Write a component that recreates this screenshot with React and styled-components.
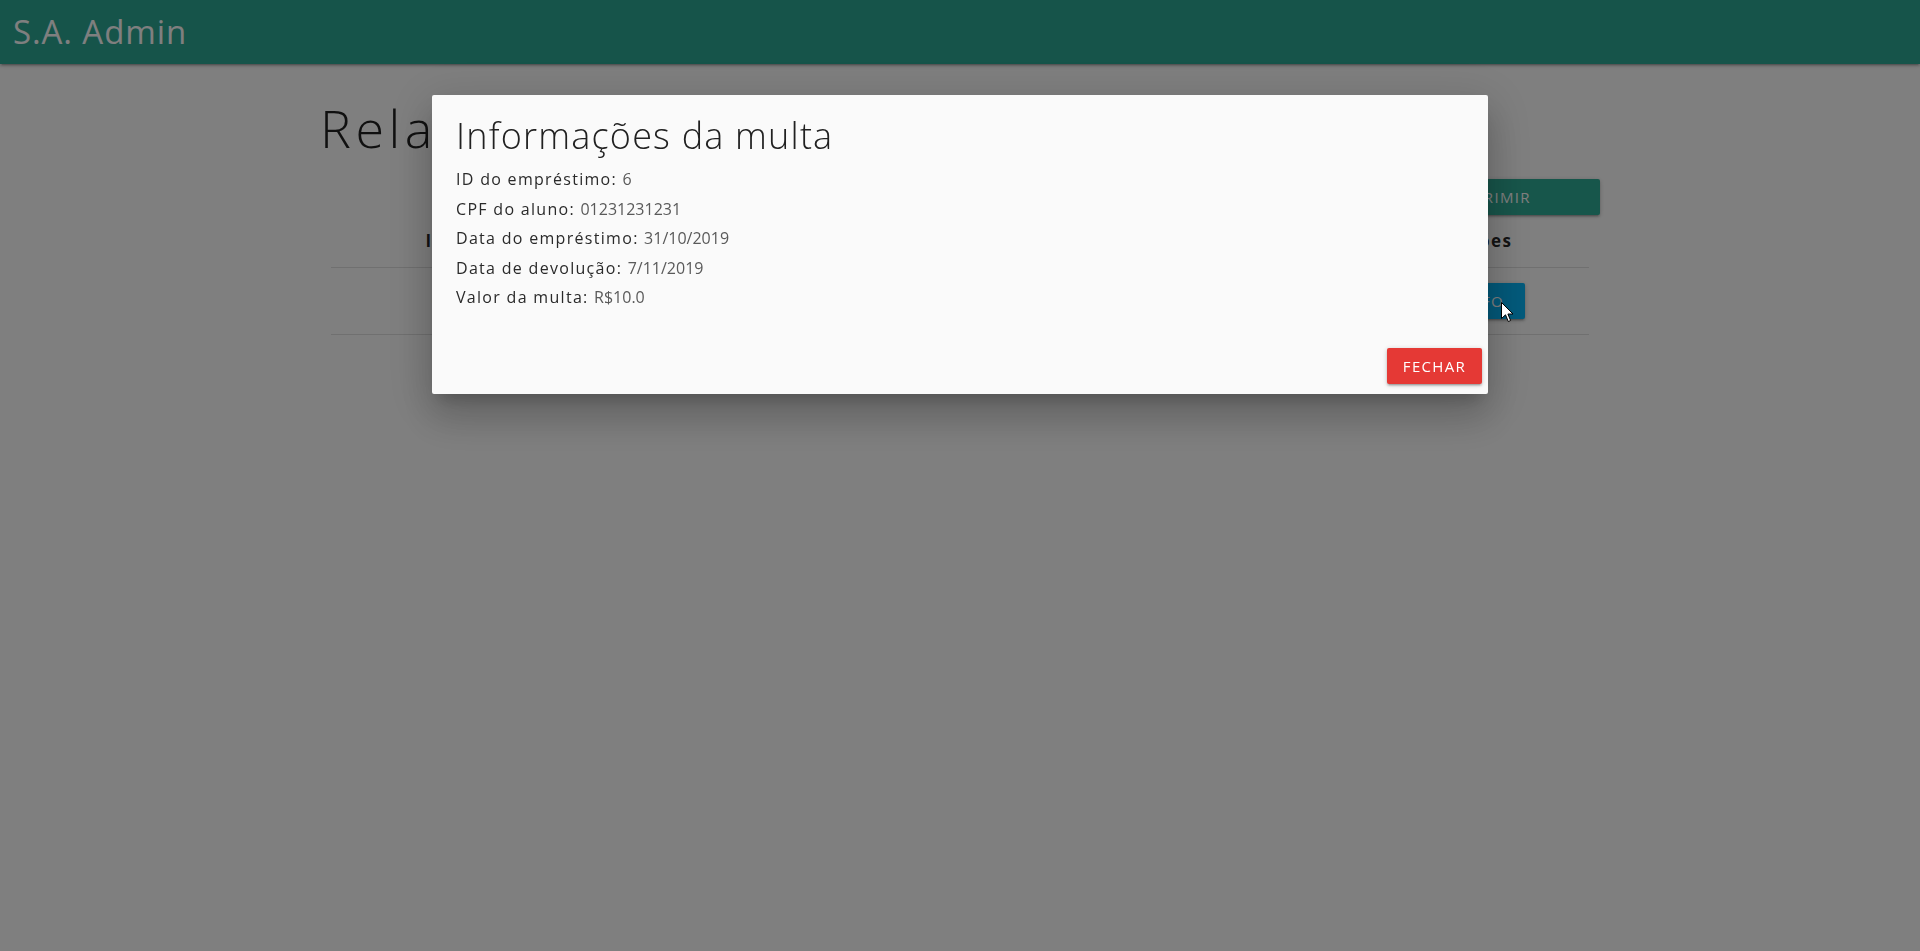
import React from "react";
import styled, { createGlobalStyle } from "styled-components";

const GlobalStyle = createGlobalStyle`
  html, body { margin: 0; padding: 0; }
  body {
    font-family: "Open Sans", "Liberation Sans", sans-serif;
    background: #ffffff;
    color: rgba(0, 0, 0, 0.87);
  }
  * { box-sizing: border-box; }
`;

const Page = styled.div`
  min-height: 100vh;
`;

const Navbar = styled.nav`
  height: 64px;
  background: #2ca894;
  display: flex;
  align-items: center;
  padding-left: 13px;
  box-shadow: 0 2px 2px 0 rgba(0, 0, 0, 0.14), 0 3px 1px -2px rgba(0, 0, 0, 0.12),
    0 1px 5px 0 rgba(0, 0, 0, 0.2);
`;

const Brand = styled.div`
  color: #ffffff;
  font-size: 33px;
  line-height: 64px;
  letter-spacing: 0.9px;
  font-weight: 400;
`;

const Container = styled.main`
  width: 1280px;
  margin: 0 auto;
`;

const PageTitle = styled.h3`
  margin: 35px 0 0;
  font-size: 52px;
  line-height: 57px;
  letter-spacing: 4.5px;
  font-weight: 300;
  color: rgba(0, 0, 0, 0.87);
`;

const Toolbar = styled.div`
  display: flex;
  justify-content: flex-end;
  margin-top: 23px;
`;

const Button = styled.button`
  height: 36px;
  padding: 0 ${(p) => p.$pad || 16}px;
  border: none;
  border-radius: 2px;
  background: ${(p) => p.$bg};
  color: #ffffff;
  font-family: inherit;
  font-size: 15px;
  letter-spacing: 1.3px;
  text-transform: uppercase;
  display: inline-flex;
  align-items: center;
  justify-content: center;
  width: ${(p) => (p.$width ? `${p.$width}px` : "auto")};
  box-shadow: 0 2px 2px 0 rgba(0, 0, 0, 0.14), 0 3px 1px -2px rgba(0, 0, 0, 0.12),
    0 1px 5px 0 rgba(0, 0, 0, 0.2);
  cursor: pointer;
`;

const Table = styled.table`
  width: calc(100% - 22.5px);
  margin: 0 11.25px;
  border-collapse: collapse;
  table-layout: fixed;
`;

const Row = styled.tr`
  border-bottom: 1px solid rgba(0, 0, 0, 0.12);
`;

const Th = styled.th`
  padding: 15px 5px;
  font-size: 17px;
  line-height: 22px;
  letter-spacing: 1.5px;
  font-weight: 700;
  text-align: center;
  white-space: nowrap;
`;

const Td = styled.td`
  padding: 15px 5px;
  font-size: 16px;
  line-height: 23px;
  text-align: center;
  vertical-align: middle;
`;

const Overlay = styled.div`
  position: fixed;
  inset: 0;
  background: rgba(0, 0, 0, 0.5);
  z-index: 10;
`;

const Modal = styled.div`
  position: fixed;
  top: 10%;
  left: 0;
  right: 0;
  margin: 0 auto;
  width: 55%;
  background: #fafafa;
  border-radius: 2px;
  z-index: 11;
  display: flex;
  flex-direction: column;
  box-shadow: 0 24px 38px 3px rgba(0, 0, 0, 0.14), 0 9px 46px 8px rgba(0, 0, 0, 0.12),
    0 11px 15px -7px rgba(0, 0, 0, 0.2);
`;

const ModalContent = styled.div`
  padding: 24px 24px 29px;
`;

const ModalTitle = styled.h4`
  margin: 0 0 14px;
  font-size: 36px;
  line-height: 34px;
  letter-spacing: 1.2px;
  font-weight: 300;
  color: #212121;
`;

const InfoLine = styled.p`
  margin: 0;
  font-size: 16px;
  line-height: 24px;
  & + & {
    margin-top: 5.5px;
  }
`;

const Label = styled.span`
  color: #2a2a2a;
  letter-spacing: 1.3px;
`;

const Value = styled.span`
  color: #5a5a5a;
  letter-spacing: 0px;
`;

const ModalFooter = styled.div`
  height: 56px;
  padding: 4px 6px;
  display: flex;
  justify-content: flex-end;
  align-items: center;
`;

const Cursor = styled.svg`
  position: fixed;
  left: 1501px;
  top: 302px;
  z-index: 20;
  pointer-events: none;
`;

const info = [
  ["ID do empréstimo", "6"],
  ["CPF do aluno", "01231231231"],
  ["Data do empréstimo", "31/10/2019"],
  ["Data de devolução", "7/11/2019"],
  ["Valor da multa", "R$10.0"],
];

const headers = ["ID", "CPF do aluno", "Data do empréstimo", "Data de devolução", "Valor da multa", "Ações"];

export default function App() {
  return (
    <Page>
      <GlobalStyle />
      <Navbar>
        <Brand>S.A. Admin</Brand>
      </Navbar>
      <Container>
        <PageTitle>Relatório de multas</PageTitle>
        <Toolbar>
          <Button $bg="#2fac96" $width={216}>Imprimir</Button>
        </Toolbar>
        <Table>
          <thead>
            <Row>
              {headers.map((h) => (
                <Th key={h}>{h}</Th>
              ))}
            </Row>
          </thead>
          <tbody>
            <Row>
              <Td>6</Td>
              <Td>01231231231</Td>
              <Td>31/10/2019</Td>
              <Td>7/11/2019</Td>
              <Td>R$10.0</Td>
              <Td>
                <Button $bg="#05b4f6" $pad={21}>Info</Button>
              </Td>
            </Row>
          </tbody>
        </Table>
      </Container>
      <Overlay />
      <Modal>
        <ModalContent>
          <ModalTitle>Informações da multa</ModalTitle>
          {info.map(([k, v]) => (
            <InfoLine key={k}>
              <Label>{k}: </Label>
              <Value>{v}</Value>
            </InfoLine>
          ))}
        </ModalContent>
        <ModalFooter>
          <Button $bg="#e53935">Fechar</Button>
        </ModalFooter>
      </Modal>
      <Cursor width="13" height="21" viewBox="0 0 13 21">
        <path d="M0.5 0.5 L0.5 16.5 L4.5 12.8 L7.3 19.5 L9.6 18.5 L6.9 12 L12 12 Z" fill="#ffffff" stroke="#000000" strokeWidth="1" strokeLinejoin="miter" />
      </Cursor>
    </Page>
  );
}
